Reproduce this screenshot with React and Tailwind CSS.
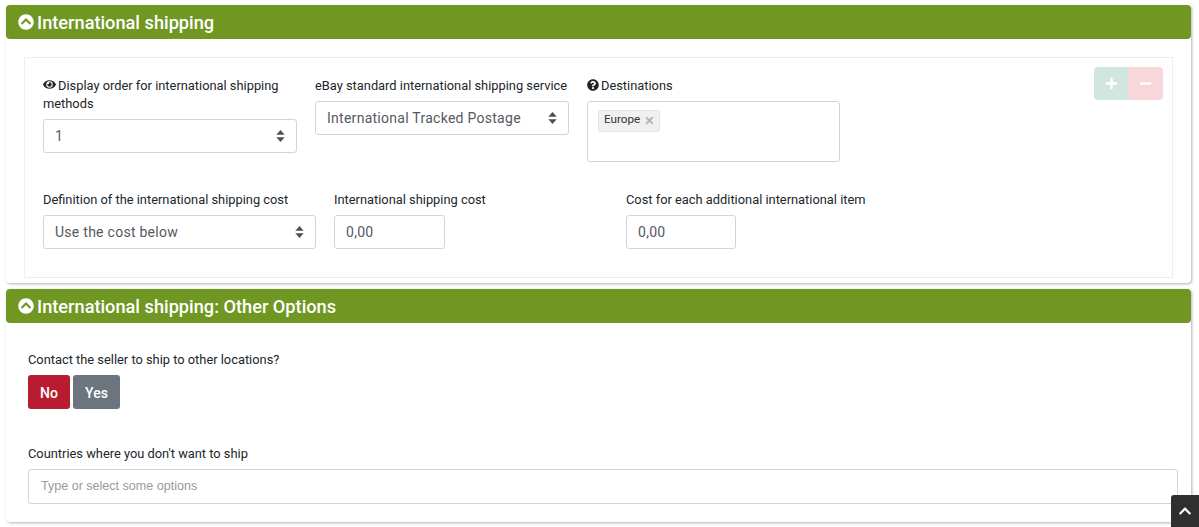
import React from "react";
import { FaChevronCircleUp, FaQuestionCircle, FaChevronUp, FaEye, FaPlus, FaMinus, FaTimes } from "react-icons/fa";

const labelCls = "block text-[12.85px] leading-[18px] text-[#212529]";
const controlCls =
  "flex h-[34px] items-center justify-between rounded-[3px] border border-[#d4d4d4] bg-white px-[11px] text-[14px] tracking-[0.27px] text-[#55595f]";

function SortCaret() {
  return (
    <svg width="9" height="14" viewBox="0 0 9 14" className="shrink-0" fill="#495057">
      <path d="M4.5 1 L8.7 5.8 H0.3 Z" />
      <path d="M4.5 13 L8.7 8.2 H0.3 Z" />
    </svg>
  );
}

function Select({ value, className = "" }) {
  return (
    <div className={`${controlCls} ${className}`}>
      <span>{value}</span>
      <SortCaret />
    </div>
  );
}

function PanelHeader({ title }) {
  return (
    <div className="flex h-[34px] items-center gap-[3px] rounded-[4px] bg-[#6f9722] pl-[12px] text-[18.2px] font-medium text-white">
      <FaChevronCircleUp className="text-[16px]" />
      <span className="pt-[2px]">{title}</span>
    </div>
  );
}

export default function App() {
  return (
    <div className="relative h-[527px] w-[1199px] overflow-hidden bg-white font-['Roboto',sans-serif]">
      <div className="pl-[6px] pr-[8px] pt-[5px]">
        <section className="h-[278px] rounded-[4px] shadow-[1px_1px_3px_rgba(0,0,0,0.3)]">
          <PanelHeader title="International shipping" />
          <div className="relative mx-[18px] mt-[18px] h-[221px] border border-[#eeeeee] px-[18px] pt-[19px]">
            <div className="absolute right-[9px] top-[9px] flex h-[33px] overflow-hidden rounded-[4px] text-[13px] text-white">
              <div className="flex w-[34px] items-center justify-center bg-[#d1e7dd]">
                <FaPlus />
              </div>
              <div className="flex w-[35px] items-center justify-center bg-[#f8d7da]">
                <FaMinus />
              </div>
            </div>

            <div className="flex gap-[18px]">
              <div className="w-[254px]">
                <label className={labelCls}>
                  <FaEye className="mr-[2px] inline-block text-[13px] align-[-1px]" />
                  Display order for international shipping methods
                </label>
                <Select value="1" className="mt-[6px]" />
              </div>
              <div className="w-[254px]">
                <label className={labelCls}>eBay standard international shipping service</label>
                <Select value="International Tracked Postage" className="mt-[6px]" />
              </div>
              <div className="w-[253px]">
                <label className={labelCls}>
                  <FaQuestionCircle className="mr-[2px] inline-block text-[12px] align-[-1px]" />
                  Destinations
                </label>
                <div className="mt-[6px] h-[61px] rounded-[3px] border border-[#d4d4d4] px-[10px] pt-[4px]">
                  <span className="inline-flex h-[22px] items-center gap-[4px] rounded-[2px] border border-[#e4e4e4] bg-[#f0f0f0] pb-[2px] pl-[5px] pr-[4px] text-[11.7px] text-[#333333]">
                    Europe
                    <FaTimes className="mt-[2px] text-[11px] text-[#b4b4b4]" />
                  </span>
                </div>
              </div>
            </div>

            <div className="mt-[29px] flex">
              <div className="mr-[18px] w-[273px]">
                <label className={labelCls}>Definition of the international shipping cost</label>
                <Select value="Use the cost below" className="mt-[6px]" />
              </div>
              <div className="mr-[181px] w-[111px]">
                <label className={`${labelCls} whitespace-nowrap`}>International shipping cost</label>
                <div className={`${controlCls} mt-[6px]`}>0,00</div>
              </div>
              <div className="w-[110px]">
                <label className={`${labelCls} whitespace-nowrap`}>Cost for each additional international item</label>
                <div className={`${controlCls} mt-[6px]`}>0,00</div>
              </div>
            </div>
          </div>
        </section>

        <section className="mt-[6px] h-[233px] rounded-[4px] shadow-[1px_1px_3px_rgba(0,0,0,0.3)]">
          <PanelHeader title="International shipping: Other Options" />
          <div className="pl-[22px] pr-[13px] pt-[28px]">
            <label className={labelCls}>Contact the seller to ship to other locations?</label>
            <div className="mt-[6px] flex gap-[3px]">
              <button className="h-[34px] w-[42px] rounded-[3px] bg-[#b81c30] pt-[2px] text-[14px] font-medium text-white">No</button>
              <button className="h-[34px] w-[47px] rounded-[3px] bg-[#6c757d] pt-[2px] text-[14px] font-medium text-white">Yes</button>
            </div>
            <label className={`${labelCls} mt-[36px]`}>Countries where you don't want to ship</label>
            <div className="mt-[6px] flex h-[35px] items-center rounded-[3px] border border-[#d4d4d4] px-[12px] font-['Liberation_Sans',sans-serif] text-[12.55px] text-[#999999]">
              Type or select some options
            </div>
          </div>
        </section>
      </div>

      <div className="absolute bottom-0 right-0 flex h-[32px] w-[28px] items-center justify-center rounded-tl-[3px] bg-[#2f2f2f] text-[14px] text-white">
        <FaChevronUp />
      </div>
    </div>
  );
}
